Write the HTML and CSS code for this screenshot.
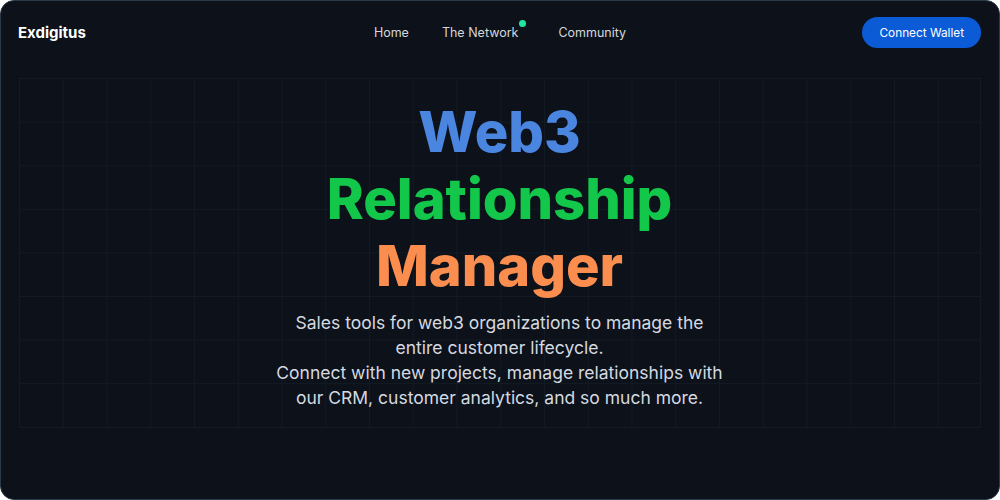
FILE: index.html
```html
<!DOCTYPE html>
<html lang="en">
<head>
<meta charset="utf-8">
<title>Exdigitus</title>
<link rel="stylesheet" href="styles.css">
</head>
<body>
<div class="app">
  <header class="topbar">
    <div class="logo">Exdigitus</div>
    <nav class="nav">
      <a class="nav-link" href="#">Home</a>
      <a class="nav-link nav-dot" href="#">The Network</a>
      <a class="nav-link" href="#">Community</a>
    </nav>
    <button class="wallet">Connect Wallet</button>
  </header>
  <main class="hero">
    <div class="hero-inner">
      <h1 class="title">
        <span class="t-blue">Web3</span>
        <span class="t-green">Relationship</span>
        <span class="t-orange">Manager</span>
      </h1>
      <p class="lead">Sales tools for web3 organizations to manage the<br>entire customer lifecycle.<br>Connect with new projects, manage relationships with<br>our CRM, customer analytics, and so much more.</p>
    </div>
  </main>
</div>
</body>
</html>
```
FILE: styles.css
```css
* { box-sizing: border-box; }
html, body { margin: 0; padding: 0; }
body {
  background: #ffffff;
  font-family: Inter, "Noto Sans", sans-serif;
}
.app {
  width: 1000px;
  height: 500px;
  background: #0c111a;
  border: 1px solid #2a3a48;
  border-radius: 14px;
  overflow: hidden;
  display: flex;
  flex-direction: column;
}
.topbar {
  height: 63px;
  flex: none;
  display: flex;
  align-items: center;
  padding: 0 18px 0 17px;
  position: relative;
}
.logo {
  color: #ffffff;
  font-weight: 700;
  font-size: 15px;
  flex: 1;
}
.nav {
  position: absolute;
  left: 0;
  right: 0;
  top: 0;
  bottom: 0;
  display: flex;
  justify-content: center;
  align-items: center;
  gap: 33px;
  padding-left: 0;
  pointer-events: none;
}
.nav-link {
  color: #d4d8de;
  text-decoration: none;
  font-size: 12.5px;
  pointer-events: auto;
}
.nav-dot { position: relative; margin-right: 7px; }
.nav-dot::after {
  content: "";
  position: absolute;
  right: -8px;
  top: -5px;
  width: 7px;
  height: 7px;
  border-radius: 50%;
  background: #1ee8a0;
}
.wallet {
  position: relative;
  z-index: 1;
  background: #0b5ad6;
  color: #ffffff;
  border: none;
  border-radius: 16px;
  height: 31px;
  padding: 0 17px;
  font-family: inherit;
  font-size: 11.8px;
  font-weight: 400;
}
.hero {
  margin: 14px 18px 0 18px;
  height: 350px;
  background-color: #0c111a;
  background-image:
    linear-gradient(to right, #121a24 1px, transparent 1px),
    linear-gradient(to bottom, #121a24 1px, transparent 1px);
  background-size: 43.75px 43.6px;
  border-right: 1px solid #121a24;
  border-bottom: 1px solid #121a24;
  display: flex;
  justify-content: center;
}
.hero-inner {
  text-align: center;
  padding-top: 21px;
}
.title {
  margin: 0;
  font-size: 56px;
  line-height: 67px;
  font-weight: 800;
  letter-spacing: 0;
}
.title span { display: block; }
.t-blue { color: #4a86e0; }
.t-green { color: #12c74a; }
.t-orange { color: #fb8e4f; }
.lead {
  margin: 10px 0 0;
  color: #d5d9e0;
  font-size: 17.5px;
  line-height: 25px;
}
```
